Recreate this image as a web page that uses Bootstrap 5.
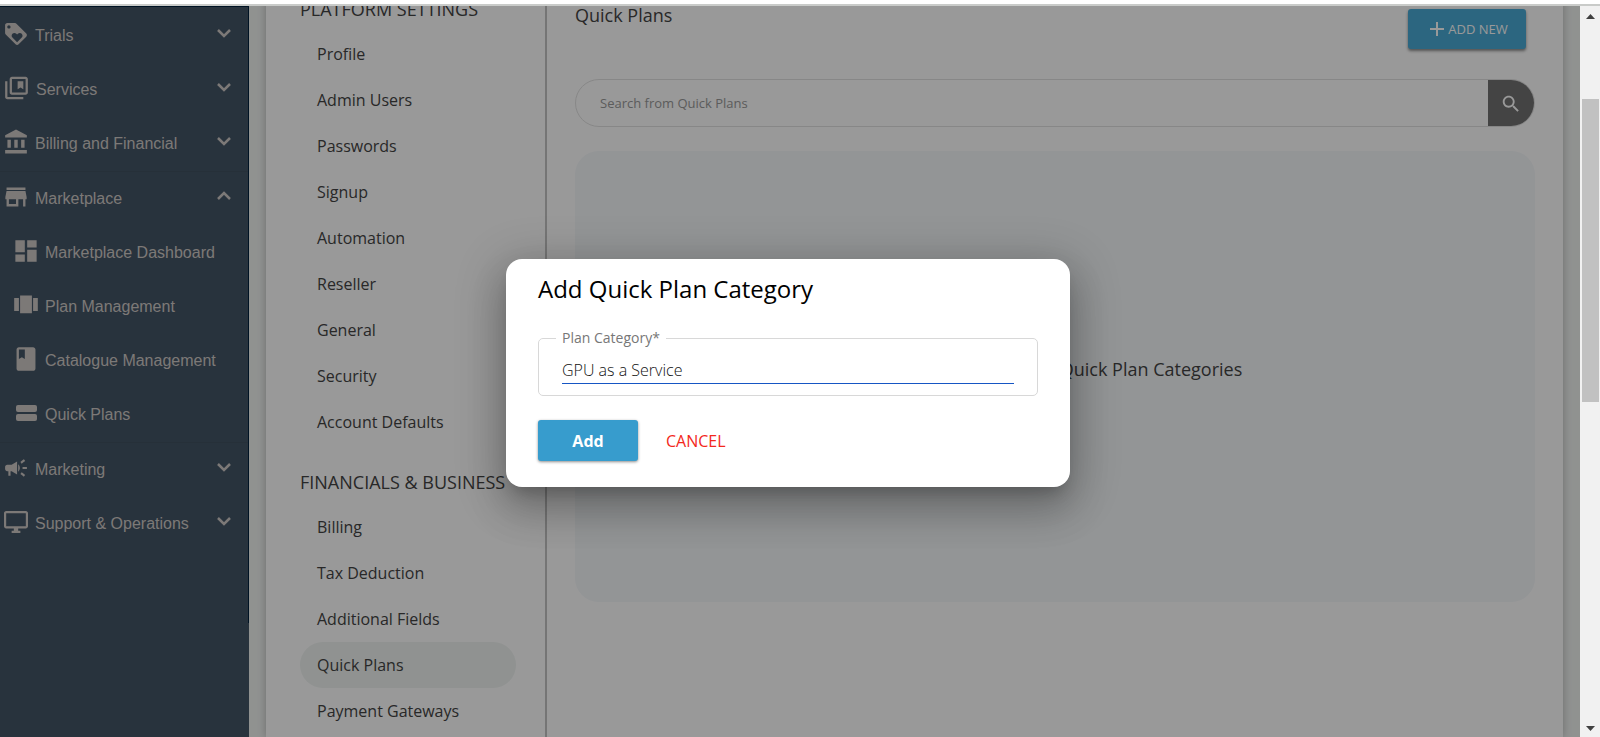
<!DOCTYPE html>
<html lang="en">
<head>
<meta charset="utf-8">
<meta name="viewport" content="width=device-width, initial-scale=1">
<title>Quick Plans</title>
<link href="https://cdn.jsdelivr.net/npm/bootstrap@5.3.0/dist/css/bootstrap.min.css" rel="stylesheet">
<style>
  body { font-family: "Open Sans", sans-serif; font-size: 16px; line-height: 24px; color: #444; background: #fff; }
  a { color: inherit; text-decoration: none; }
  svg { fill: currentColor; flex: none; }
  .shell { height: 100vh; }
  .topline { height: 6px; border-bottom: 2px solid #c9cbc9; flex: none; }
  .workspace { min-height: 0; background: #f0f3f1; }

  .side { width: 249px; background: #445566; color: #cfcac7; font-family: "Liberation Sans", Arial, sans-serif; flex: none; }
  .side-menu { height: 617px; padding-top: 2px; border-right: 1px solid #00203c; border-top: 1px solid #00203c; }
  .side-link { height: 54px; padding: 0 15px 0 4px; gap: 7px; }
  .side-link svg { margin-bottom: 4px; }
  .side-link span + svg { margin-bottom: 6px; }
  .side-link.sub { padding-left: 13px; gap: 6px; }
  .side-group { border-top: 1px solid #405060; border-bottom: 1px solid #405060; }

  .page-card { margin: -20px 17px 0 17px; background: #fff; box-shadow: 0 0 8px rgba(0,0,0,.25); }
  .settings { width: 281px; padding: 11px 29px 0 34px; border-right: 2px solid #c4c4c4; flex: none; }
  .settings h2 { font-size: 18px; line-height: 24px; font-weight: 400; margin: 0 0 10px 0; white-space: nowrap; }
  .settings h2 + ul { margin-bottom: 25px; }
  .settings li a { display: block; height: 46px; line-height: 46px; padding-left: 17px; border-radius: 23px; }
  .settings li a.active { background: #f0f4f2; }

  .plans { padding: 17px 28px 0 28px; min-width: 0; }
  .plans h1 { font-size: 18px; line-height: 24px; font-weight: 400; margin: 0; }
  .btn-new { height: 40px; width: 118px; margin: 6px 9px 0 0; padding: 0 2px 0 6px; border: 0; border-radius: 3px; background: #4aaad5; color: #fff; font-size: 13px; box-shadow: 0 2px 3px rgba(0,0,0,.45); }
  .finder { height: 48px; margin-top: 30px; border: 1px solid #e2e2e2; border-radius: 24px; }
  .finder input { border: 0; outline: 0; background: transparent; padding: 0 24px; font-size: 13px; min-width: 0; }
  .finder input::placeholder { color: #999; opacity: 1; }
  .finder button { width: 46px; border: 0; background: #727272; color: #fff; }
  .empty { margin-top: 24px; min-height: 451px; padding-bottom: 16px; border-radius: 24px; background: #f5f8fb; font-size: 18px; }

  .scrim { inset: 0; background: rgba(0,0,0,.4); padding: 3px 4px 0 0; }
  .dialog-box { width: 564px; height: 228px; padding: 16px 32px 0 32px; border-radius: 16px; background: #fff; color: #000; box-shadow: 0 11px 15px -7px rgba(0,0,0,.2), 0 24px 38px 3px rgba(0,0,0,.14), 0 9px 46px 8px rgba(0,0,0,.2); }
  .dialog-box h2 { font-size: 24px; line-height: 28px; font-weight: 500; margin: 0 0 25px 0; }
  .field { border: 1px solid #d8d8d8; border-radius: 5px; padding: 0 23px 11px 23px; margin: 0; }
  .field legend { float: none; width: auto; margin: 0 0 0 -6px; padding: 0 6px; font-size: 14px; line-height: 20px; color: #777; }
  .field input { display: block; width: 100%; height: 27px; margin-top: 9px; border: 0; border-bottom: 1px solid #1656c4; border-radius: 0; outline: 0; padding: 0; font-size: 16px; color: #111; font-weight: 300; }
  .btn-add { width: 100px; height: 41px; border: 0; border-radius: 3px; background: #379ccd; color: #fff; font-weight: 700; box-shadow: 0 1px 3px rgba(0,0,0,.45); }
  .btn-cancel { border: 0; background: transparent; color: #f3281c; padding: 0 4px; }

  .scroller { width: 20px; background: #f1f1f1; color: #404040; flex: none; padding: 6px 1px 4px 2px; }
  .scroller-thumb { height: 303px; margin-top: 79px; background: #c1c1c1; }
</style>
</head>
<body>
<div class="shell d-flex flex-column overflow-hidden">
  <div class="topline"></div>
  <div class="d-flex flex-grow-1 overflow-hidden">
    <div class="workspace d-flex flex-grow-1 position-relative overflow-hidden">

      <aside class="side">
        <nav class="side-menu" aria-label="Main">
          <a href="#" class="side-link d-flex align-items-center"><svg width="24" height="24" viewBox="1 1 22 22"><path d="M21.41 11.58l-9-9C12.05 2.22 11.55 2 11 2H4c-1.100 0-2 .9-2 2v7c0 .55.22 1.050.59 1.420l9 9c.36.36.86.58 1.410.58s1.050-.22 1.410-.59l7-7c.37-.36.59-.86.59-1.410s-.23-1.060-.59-1.420zM5.500 7C4.670 7 4 6.330 4 5.500S4.670 4 5.500 4 7 4.670 7 5.500 6.330 7 5.500 7zm11.770 8.270L13 19.540l-4.270-4.270C8.280 14.810 8 14.190 8 13.500c0-1.380 1.120-2.500 2.500-2.500.69 0 1.320.28 1.770.74l.73.72.73-.73c.45-.45 1.080-.73 1.770-.73 1.380 0 2.500 1.120 2.500 2.500 0 .69-.28 1.320-.73 1.770z"/></svg><span class="flex-grow-1">Trials</span><svg width="18" height="18" viewBox="0 0 18 18"><path d="M3 6l6 6 6-6" fill="none" stroke="currentColor" stroke-width="2.500"/></svg></a>
          <a href="#" class="side-link d-flex align-items-center"><svg width="25" height="26" viewBox="1 1 22 22"><path d="M4 6H2v14c0 1.100.9 2 2 2h14v-2H4V6zm16-4H8c-1.100 0-2 .9-2 2v12c0 1.100.9 2 2 2h12c1.100 0 2-.9 2-2V4c0-1.100-.9-2-2-2zm0 14H8V4h12v12zM13 6v7l2.500-1.500L18 13V6z"/></svg><span class="flex-grow-1">Services</span><svg width="18" height="18" viewBox="0 0 18 18"><path d="M3 6l6 6 6-6" fill="none" stroke="currentColor" stroke-width="2.500"/></svg></a>
          <a href="#" class="side-link d-flex align-items-center"><svg width="24" height="26" viewBox="1 1 21 22"><path d="M4 10v7h3v-7H4zm6 0v7h3v-7h-3zM2 22h19v-3H2v3zm14-12v7h3v-7h-3zM11.500 1L2 6v2h19V6l-9.500-5z"/></svg><span class="flex-grow-1">Billing and Financial</span><svg width="18" height="18" viewBox="0 0 18 18"><path d="M3 6l6 6 6-6" fill="none" stroke="currentColor" stroke-width="2.500"/></svg></a>
          <div class="side-group">
            <a href="#" class="side-link d-flex align-items-center"><svg width="24" height="26" viewBox="2 1 20 22"><path d="M20 4H4v2h16V4zm1 10v-2l-1-5H4l-1 5v2h1v6h10v-6h4v6h2v-6h1zm-9 4H6v-4h6v4z"/></svg><span class="flex-grow-1">Marketplace</span><svg width="18" height="18" viewBox="0 0 18 18"><path d="M3 12l6-6 6 6" fill="none" stroke="currentColor" stroke-width="2.500"/></svg></a>
            <a href="#" class="side-link sub d-flex align-items-center"><svg width="26" height="26" viewBox="1 1 22 22"><path d="M3 13h8V3H3v10zm0 8h8v-6H3v6zm10 0h8V11h-8v10zm0-18v6h8V3h-8z"/></svg><span>Marketplace Dashboard</span></a>
            <a href="#" class="side-link sub d-flex align-items-center"><svg width="26" height="26" viewBox="1 1 22 22"><path d="M7 19h10V4H7v15zm-5-2h4V6H2v11zM18 6v11h4V6h-4z"/></svg><span>Plan Management</span></a>
            <a href="#" class="side-link sub d-flex align-items-center"><svg width="26" height="26" viewBox="1 1 22 22"><path d="M18 2H6c-1.100 0-2 .9-2 2v16c0 1.100.9 2 2 2h12c1.100 0 2-.9 2-2V4c0-1.100-.9-2-2-2zM6 4h5v8l-2.500-1.500L6 12V4z"/></svg><span>Catalogue Management</span></a>
            <a href="#" class="side-link sub d-flex align-items-center"><svg width="26" height="26" viewBox="0 0 26 26"><rect x="3" y="5" width="21" height="7" rx="2"/><rect x="3" y="14" width="21" height="7" rx="2"/></svg><span>Quick Plans</span></a>
          </div>
          <a href="#" class="side-link d-flex align-items-center"><svg width="24" height="24" viewBox="1 1 22 22"><path d="M18 11v2h4v-2h-4zm-2 6.610c.96.71 2.210 1.650 3.200 2.390.4-.53.8-1.070 1.200-1.600-.99-.74-2.240-1.680-3.200-2.400-.4.540-.8 1.080-1.200 1.610zM20.400 5.600c-.4-.53-.8-1.070-1.200-1.600-.99.74-2.240 1.680-3.200 2.400.4.530.8 1.070 1.200 1.600.96-.72 2.210-1.650 3.200-2.400zM4 9c-1.100 0-2 .9-2 2v2c0 1.100.9 2 2 2h1v4h2v-4h1l5 3V6L8 9H4zm11.500 3c0-1.330-.58-2.530-1.500-3.350v6.690c.92-.81 1.500-2.010 1.500-3.340z"/></svg><span class="flex-grow-1">Marketing</span><svg width="18" height="18" viewBox="0 0 18 18"><path d="M3 6l6 6 6-6" fill="none" stroke="currentColor" stroke-width="2.500"/></svg></a>
          <a href="#" class="side-link d-flex align-items-center"><svg width="24" height="26" viewBox="1 1 22 22"><path d="M21 2H3c-1.100 0-2 .9-2 2v12c0 1.100.9 2 2 2h7v2H8v2h8v-2h-2v-2h7c1.100 0 2-.9 2-2V4c0-1.100-.9-2-2-2zm0 14H3V4h18v12z"/></svg><span class="flex-grow-1">Support &amp; Operations</span><svg width="18" height="18" viewBox="0 0 18 18"><path d="M3 6l6 6 6-6" fill="none" stroke="currentColor" stroke-width="2.500"/></svg></a>
        </nav>
      </aside>

      <main class="page-card d-flex flex-grow-1">
        <nav class="settings" aria-label="Settings">
          <h2>PLATFORM SETTINGS</h2>
          <ul class="list-unstyled">
            <li><a href="#">Profile</a></li>
            <li><a href="#">Admin Users</a></li>
            <li><a href="#">Passwords</a></li>
            <li><a href="#">Signup</a></li>
            <li><a href="#">Automation</a></li>
            <li><a href="#">Reseller</a></li>
            <li><a href="#">General</a></li>
            <li><a href="#">Security</a></li>
            <li><a href="#">Account Defaults</a></li>
          </ul>
          <h2>FINANCIALS &amp; BUSINESS</h2>
          <ul class="list-unstyled">
            <li><a href="#">Billing</a></li>
            <li><a href="#">Tax Deduction</a></li>
            <li><a href="#">Additional Fields</a></li>
            <li><a href="#" class="active" aria-current="page">Quick Plans</a></li>
            <li><a href="#">Payment Gateways</a></li>
          </ul>
        </nav>
        <section class="plans flex-grow-1">
          <div class="d-flex justify-content-between align-items-start">
            <h1>Quick Plans</h1>
            <button type="button" class="btn-new d-flex align-items-center justify-content-center gap-1"><svg width="14" height="14" viewBox="0 0 14 14"><path d="M6 0h2v6h6v2H8v6H6V8H0V6h6z"/></svg>ADD NEW</button>
          </div>
          <form class="finder d-flex overflow-hidden" role="search">
            <input type="text" class="flex-grow-1" placeholder="Search from Quick Plans" aria-label="Search from Quick Plans">
            <button type="button" aria-label="Search"><svg width="22" height="22" viewBox="0 0 24 24"><path d="M15.500 14h-.79l-.28-.27C15.410 12.590 16 11.110 16 9.500 16 5.910 13.090 3 9.500 3S3 5.910 3 9.500 5.910 16 9.500 16c1.610 0 3.090-.59 4.230-1.570l.27.28v.79l5 4.990L20.490 19l-4.990-5zm-6 0C7.010 14 5 11.990 5 9.500S7.010 5 9.500 5 14 7.010 14 9.500 11.990 14 9.500 14z"/></svg></button>
          </form>
          <div class="empty d-flex align-items-center justify-content-center">There are currently no Quick Plan Categories</div>
        </section>
      </main>

      <div class="scrim position-absolute d-flex align-items-center justify-content-center">
        <form class="dialog-box" role="dialog" aria-labelledby="dialogTitle">
          <h2 id="dialogTitle">Add Quick Plan Category</h2>
          <fieldset class="field">
            <legend><label for="planCategory">Plan Category*</label></legend>
            <input id="planCategory" type="text" value="GPU as a Service">
          </fieldset>
          <div class="d-flex align-items-center mt-4">
            <button type="button" class="btn-add">Add</button>
            <button type="button" class="btn-cancel ms-4">CANCEL</button>
          </div>
        </form>
      </div>
    </div>

    <div class="scroller d-flex flex-column" aria-hidden="true">
      <svg width="17" height="8" viewBox="0 0 17 8"><path d="M4 7l4.500-5L13 7z"/></svg>
      <div class="scroller-thumb"></div>
      <svg class="mt-auto" width="17" height="8" viewBox="0 0 17 8"><path d="M4 1l4.500 5L13 1z"/></svg>
    </div>
  </div>
</div>
<script src="https://cdn.jsdelivr.net/npm/bootstrap@5.3.0/dist/js/bootstrap.bundle.min.js"></script>
</body>
</html>
